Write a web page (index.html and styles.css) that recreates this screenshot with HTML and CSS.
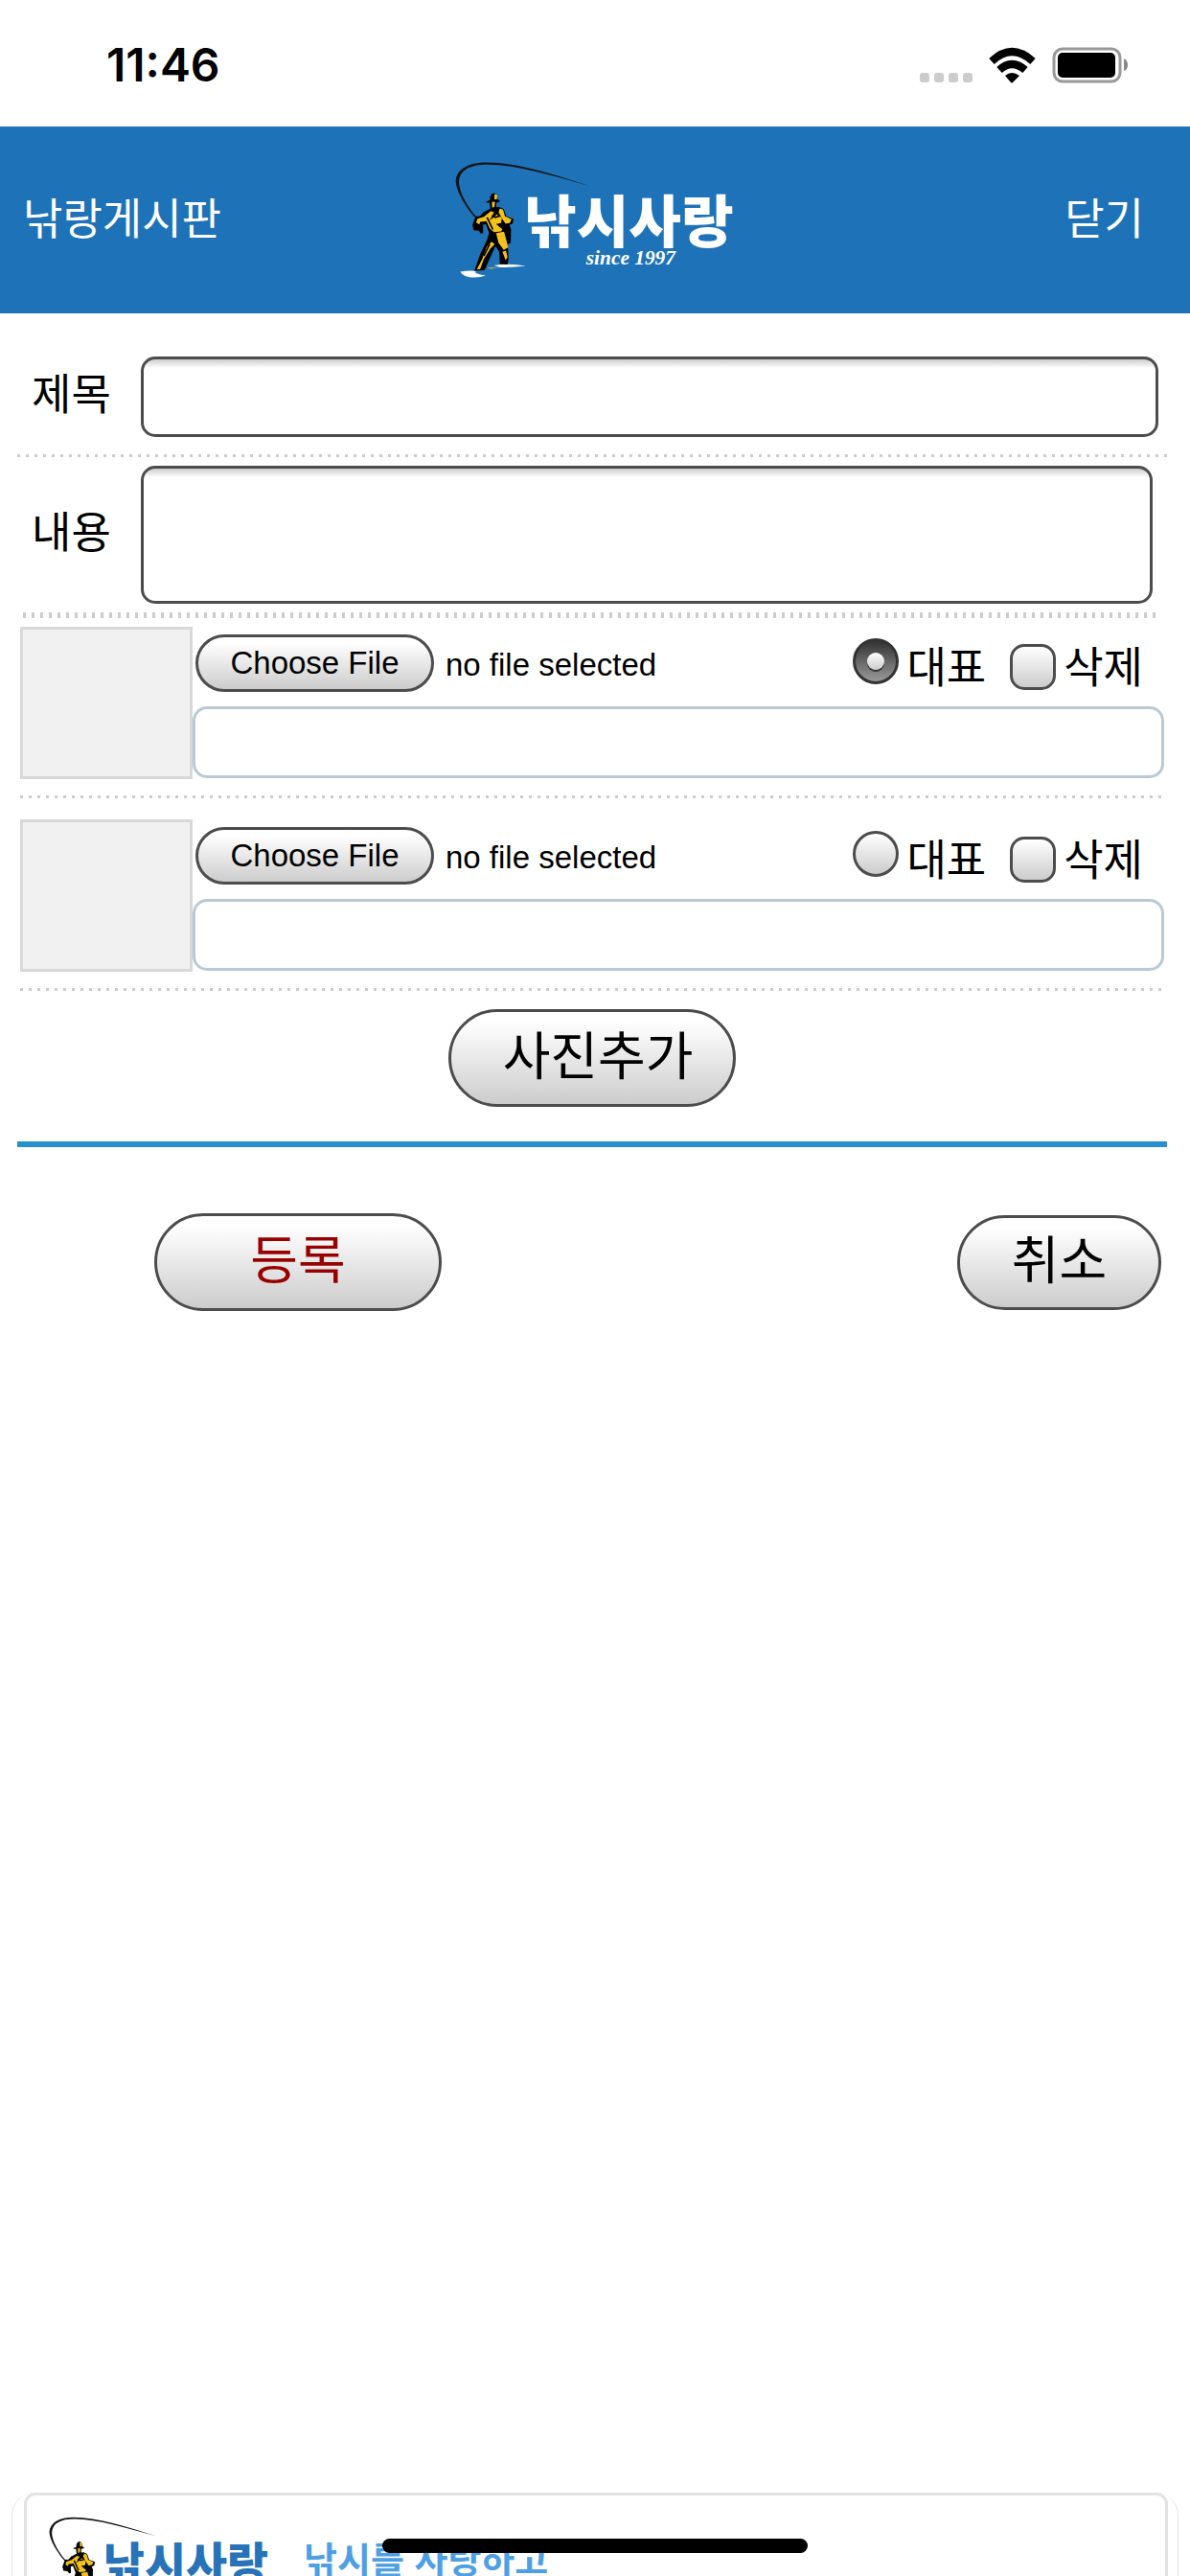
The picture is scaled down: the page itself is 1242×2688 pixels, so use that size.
FILE: index.html
```
<!DOCTYPE html>
<html lang="ko">
<head>
    <meta charset="utf-8">
    <meta name="viewport" content="width=device-width, initial-scale=1">
    <title>낚랑게시판</title>
    <link rel="stylesheet" href="styles.css">
</head>
<body>
    <!-- shared logo -->
    <svg class="defs" width="0" height="0" aria-hidden="true">
        <symbol id="logo" viewBox="100 80 890 380" overflow="visible">
            <path class="rod" d="M168 262C140 232 108 178 108 148C110 112 146 90 205 90C300 90 420 128 530 165C420 134 300 97 208 97C152 97 121 114 118 150C118 182 144 228 174 262Z"/>
            <path class="splash" d="M122 432Q150 427 172 430Q160 438 202 444Q180 452 150 449Q128 444 122 432ZM228 412Q275 405 327 414Q285 419 246 418Z"/>
            <path fill="#000" d="M203 213L215 208Q214 190 226 186Q238 186 239 206L246 209L244 214L235 216L234 230L244 229L258 236L266 259L289 267L286 281L276 286L281 298L280 342L271 346L273 392L270 409L246 408L244 370L232 352L218 383L198 427L166 429L184 378L206 332L212 310L202 283L193 286L194 311L186 313L180 304L164 302L160 286L170 259L184 258L194 246L216 235L214 216L205 216Z"/>
            <path fill="#f2c21c" d="M229 189L238 193L237 205L229 206ZM221 213L231 214L229 229L222 232ZM196 260L218 242L228 247L214 271L219 268L240 250L252 265L250 280L234 283L254 299L250 306L228 308L215 298L204 274L184 276L182 284L172 278L176 266ZM246 234L256 238L262 259L282 268L278 279L264 282L254 268L242 246ZM234 311L259 307L268 340L272 356L258 364L242 342ZM220 338L230 346L216 360L196 392L184 424L174 424L190 394L205 354ZM254 370L265 366L270 386L264 396ZM205 420L240 418L218 423Z"/>
            <path d="M232 239L244 258L232 262L222 255M206 262L224 300M214 346L196 382" fill="none" stroke="#000" stroke-width="5"/>
            <text class="logo-name" x="322" y="340">낚시사랑</text>
            <text class="logo-since" x="516" y="408">since 1997</text>
        </symbol>
    </svg>

    <div class="status-bar">
        <span class="time">11:46</span>
        <svg width="218" height="38" viewBox="0 0 218 38" aria-hidden="true">
            <g fill="#ccc">
                <rect x="0" y="27" width="10" height="10" rx="3"/>
                <rect x="15" y="27" width="10" height="10" rx="3"/>
                <rect x="30" y="27" width="10" height="10" rx="3"/>
                <rect x="45" y="27" width="10" height="10" rx="3"/>
            </g>
            <g fill="none" stroke="#000" stroke-width="8">
                <path d="M75 15Q96 -5 118 15"/>
                <path d="M83 24Q96 12 110 24"/>
            </g>
            <path d="M89 30Q96 24 104 30L97 37Q96 38 95 37Z"/>
            <rect x="140" y="2" width="69" height="34" rx="9" fill="none" stroke="#999" stroke-width="3"/>
            <rect x="144" y="6" width="60" height="26" rx="5"/>
            <path fill="#888" d="M213 12Q217 14 217 19T213 25Z"/>
        </svg>
    </div>

    <header class="header">
        <a class="header-link" href="#">낚랑게시판</a>
        <svg class="logo" role="img" aria-label="낚시사랑"><use href="#logo"/></svg>
        <a class="header-link close" href="#">닫기</a>
    </header>

    <form class="write-form">
        <div class="field">
            <label for="subject">제목</label>
            <input class="box" type="text" id="subject">
        </div>
        <div class="dots"></div>
        <div class="field field-content">
            <label for="content">내용</label>
            <textarea class="box" id="content"></textarea>
        </div>
        <div class="dots thick"></div>

        <div class="photo">
            <div class="thumb"></div>
            <div class="photo-body">
                <div class="photo-top">
                    <input class="file" type="file" id="file1" aria-label="사진 1">
                    <span class="file-name">no file selected</span>
                    <div class="options">
                        <input type="radio" name="main" id="main1" checked>
                        <label for="main1">대표</label>
                        <input type="checkbox" id="del1">
                        <label for="del1">삭제</label>
                    </div>
                </div>
                <input class="caption" type="text" aria-label="사진 1 설명">
            </div>
        </div>
        <div class="dots inset"></div>

        <div class="photo photo-next">
            <div class="thumb"></div>
            <div class="photo-body">
                <div class="photo-top">
                    <input class="file" type="file" id="file2" aria-label="사진 2">
                    <span class="file-name">no file selected</span>
                    <div class="options">
                        <input type="radio" name="main" id="main2">
                        <label for="main2">대표</label>
                        <input type="checkbox" id="del2">
                        <label for="del2">삭제</label>
                    </div>
                </div>
                <input class="caption" type="text" aria-label="사진 2 설명">
            </div>
        </div>
        <div class="dots inset"></div>

        <div class="add-row">
            <button class="btn btn-add" type="button">사진추가</button>
        </div>
        <div class="actions">
            <button class="btn btn-submit" type="submit">등록</button>
            <button class="btn btn-cancel" type="button">취소</button>
        </div>
    </form>

    <footer class="footer">
        <div class="footer-card">
            <svg class="footer-logo" role="img" aria-label="낚시사랑"><use href="#logo"/></svg>
            <span class="slogan">낚시를 사랑하고</span>
        </div>
    </footer>
    <div class="home-indicator"></div>
</body>
</html>
```

FILE: styles.css
```
* {
    box-sizing: border-box;
}
body {
    margin: 0;
    height: 100vh;
    overflow: hidden;
    display: flex;
    flex-direction: column;
    background: #fff;
    color: #000;
    font-family: "Liberation Sans", "Noto Sans CJK KR", sans-serif;
    font-size: 45px;
}
input, textarea, button {
    margin: 0;
    font-family: inherit;
    color: #000;
}
.defs {
    position: absolute;
}

/* status bar */
.status-bar {
    flex: none;
    height: 132px;
    padding: 3px 64px 0 111px;
    display: flex;
    align-items: center;
    justify-content: space-between;
}
.time {
    font: 600 48px/60px Inter, sans-serif;
}

/* header */
.header {
    flex: none;
    height: 195px;
    padding: 0 24px;
    background: #1e73b8;
    display: grid;
    grid-template-columns: 1fr auto 1fr;
    align-items: center;
    color: #fff;
}
.header-link {
    color: #fff;
    text-decoration: none;
    line-height: 66px;
}
.close {
    padding-right: 24px;
    text-align: right;
}
.logo {
    width: 297px;
    height: 127px;
    overflow: visible;
}
.logo-name {
    font: 900 178px "Noto Sans CJK KR", sans-serif;
    fill: currentColor;
}
.logo-since {
    font: italic bold 64px "Liberation Serif", serif;
    fill: currentColor;
}
.rod {
    fill: #151515;
}
.splash {
    fill: #fff;
}

/* form */
.write-form {
    padding: 45px 24px 0 18px;
}
.field {
    display: flex;
    align-items: center;
    padding-right: 9px;
}
.field-content {
    padding-right: 15px;
}
.field label {
    flex: none;
    width: 129px;
    padding: 0 0 12px 15px;
}
.box {
    flex: 1;
    min-width: 0;
    height: 84px;
    padding: 12px;
    border: 3px solid #4c4c4c;
    border-radius: 15px;
    background: linear-gradient(#ccc, #fff 9px);
    font-size: 45px;
    resize: none;
}
textarea.box {
    height: 144px;
}
.dots {
    height: 3px;
    margin: 18px 0 9px;
    background: repeating-linear-gradient(90deg, #ccc 0 3px, transparent 3px 9px);
}
.dots.thick {
    height: 6px;
    margin: 9px 9px 9px 6px;
}
.dots.inset {
    margin: 17px 3px 19px;
}

/* photo rows */
.photo {
    display: flex;
    margin: 0 3px;
}
.photo-next {
    margin-top: 22px;
}
.thumb {
    flex: none;
    width: 180px;
    height: 159px;
    border: 3px solid #d8d8d8;
    background: #f1f1f1;
}
.photo-body {
    flex: 1;
    min-width: 0;
}
.photo-top {
    display: flex;
    height: 83px;
    padding: 8px 22px 15px 3px;
}
.file {
    width: 249px;
    height: 60px;
    color: transparent;
    font-size: 33px;
}
.file::file-selector-button {
    width: 249px;
    height: 60px;
    margin: 0;
    padding: 0;
    border: 3px solid #4c4c4c;
    border-radius: 30px;
    background: linear-gradient(#fff 10%, #ccc);
    color: #000;
    font: 33px "Liberation Sans", sans-serif;
}
.file-name {
    margin-left: 12px;
    font-size: 33px;
    line-height: 63px;
}
.options {
    display: flex;
    align-items: center;
    height: 68px;
    margin-left: auto;
}
.options input {
    appearance: none;
    width: 48px;
    height: 48px;
    margin-right: 8px;
    border: 3px solid #4c4c4c;
    background: linear-gradient(#fff, #ccc);
}
.options label {
    padding-top: 4px;
    line-height: 66px;
}
.options input[type="radio"] {
    margin-bottom: 12px;
    border-radius: 50%;
}
.options input[type="radio"]:checked {
    border-color: #333;
    background: linear-gradient(#333, #999);
    display: flex;
    align-items: center;
    justify-content: center;
}
.options input[type="radio"]:checked::before {
    content: "";
    width: 18px;
    height: 18px;
    border-radius: 50%;
    background: linear-gradient(#fff, #ccc);
    box-shadow: 0 2px 0 #333;
}
.options input[type="checkbox"] {
    margin-left: 25px;
    border-radius: 15px;
}
.caption {
    display: block;
    width: 100%;
    height: 75px;
    padding: 9px;
    border: 3px solid #b9cad6;
    border-radius: 15px;
    background: #fff;
    font-size: 33px;
}

/* buttons */
.btn {
    width: 300px;
    height: 102px;
    padding: 0 0 12px;
    border: 3px solid #4c4c4c;
    border-radius: 51px;
    background: linear-gradient(#fff 10%, #ccc);
    font-size: 54px;
    cursor: pointer;
}
.add-row {
    display: flex;
    justify-content: center;
    padding-bottom: 36px;
    border-bottom: 6px solid #2691ce;
}
.btn-add {
    padding-left: 12px;
}
.actions {
    display: flex;
    align-items: center;
    justify-content: space-between;
    padding: 69px 6px 0 143px;
}
.btn-submit {
    color: #900;
}
.btn-cancel {
    width: 213px;
    height: 99px;
}

/* footer */
.footer {
    flex: none;
    height: 87px;
    margin: auto 12px 0;
    padding: 0 10px 0 12px;
    border: solid #e2e2e2;
    border-width: 0 1px;
    border-radius: 24px 24px 0 0;
}
.footer-card {
    display: flex;
    align-items: flex-start;
    height: 120px;
    padding: 20px 20px 0 21px;
    border: 3px solid #e2e2e2;
    border-radius: 12px;
}
.footer-logo {
    flex: none;
    width: 235px;
    height: 100px;
    overflow: visible;
    color: #2873b8;
}
.slogan {
    margin: 24px 0 0 33px;
    color: #4f9fe4;
    font-size: 38px;
    font-weight: bold;
    line-height: 48px;
}
.home-indicator {
    position: fixed;
    bottom: 24px;
    left: 50%;
    width: 444px;
    height: 15px;
    margin-left: -222px;
    border-radius: 8px;
    background: #000;
}
```
